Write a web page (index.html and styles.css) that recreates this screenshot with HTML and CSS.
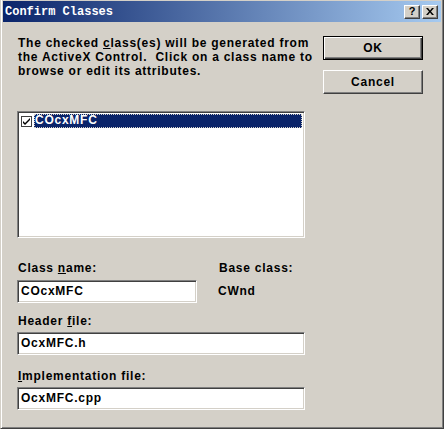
FILE: index.html
```html
<!DOCTYPE html>
<html lang="en">
<head>
    <meta charset="UTF-8">
    <title>Confirm Classes</title>
    <link rel="stylesheet" href="styles.css">
</head>
<body>
    <div class="window">
        <div class="titlebar">
            <span class="title">Confirm Classes</span>
            <div class="caption-buttons">
                <span class="cap-btn help">?</span>
                <span class="cap-btn close">
                    <svg width="8" height="7" viewBox="0 0 8 7">
                        <path d="M0 0h2l2 2.5L6 0h2L5 3.5 8 7H6L4 4.5 2 7H0l3-3.5z" fill="#000"/>
                    </svg>
                </span>
            </div>
        </div>

        <div class="dialog-body">
            <div class="main">
                <p class="intro">The checked <u>c</u>lass(es) will be generated from<br>the ActiveX Control.&nbsp; Click on a class name to<br>browse or edit its attributes.</p>

                <div class="listbox">
                    <div class="list-item">
                        <span class="check">
                            <svg width="9" height="9" viewBox="0 0 9 9">
                                <path d="M1 4l2 2 5-5v2L3 8 1 6z" fill="#000"/>
                            </svg>
                        </span>
                        <span class="item-text">COcxMFC</span>
                    </div>
                </div>

                <div class="fields">
                    <div class="field-row">
                        <div class="field half">
                            <label>Class <u>n</u>ame:</label>
                            <div class="textbox">COcxMFC</div>
                        </div>
                        <div class="field base">
                            <label>Base class:</label>
                            <div class="static">CWnd</div>
                        </div>
                    </div>
                    <div class="field header">
                        <label>Header <u>f</u>ile:</label>
                        <div class="textbox">OcxMFC.h</div>
                    </div>
                    <div class="field impl">
                        <label><u>I</u>mplementation file:</label>
                        <div class="textbox">OcxMFC.cpp</div>
                    </div>
                </div>
            </div>

            <div class="actions">
                <button type="button" class="btn default">OK</button>
                <button type="button" class="btn">Cancel</button>
            </div>
        </div>
    </div>
</body>
</html>
```

FILE: styles.css
```css
body {
    margin: 0;
    background-color: #d4d0c8;
    font-family: "Liberation Sans", Arial, sans-serif;
    font-size: 12px;
    font-weight: bold;
    letter-spacing: 0.75px;
    color: #000;
}

.window {
    width: 444px;
    height: 429px;
    box-sizing: border-box;
    background-color: #d4d0c8;
    border-left: 1px solid #d4d0c8;
    border-right: 1px solid #404040;
    border-bottom: 1px solid #404040;
    box-shadow: inset 1px 0 #fff, inset -1px -1px #808080;
    padding: 1px 2px 0 2px;
}

.titlebar {
    height: 21px;
    display: flex;
    align-items: center;
    justify-content: space-between;
    padding: 0 3px 0 2px;
    background: linear-gradient(to right, #0a246a, #a6caf0);
}

.title {
    font-family: "Liberation Mono", "DejaVu Sans Mono", monospace;
    font-size: 12px;
    font-weight: bold;
    letter-spacing: 0;
    color: #fff;
}

.caption-buttons {
    display: flex;
    gap: 2px;
}

.cap-btn {
    width: 16px;
    height: 14px;
    box-sizing: border-box;
    display: flex;
    align-items: center;
    justify-content: center;
    background-color: #d4d0c8;
    border-top: 1px solid #fff;
    border-left: 1px solid #fff;
    border-right: 1px solid #404040;
    border-bottom: 1px solid #404040;
    box-shadow: inset -1px -1px #808080;
    font-size: 11px;
    letter-spacing: 0;
    line-height: 1;
}

.dialog-body {
    display: flex;
    gap: 18px;
    padding: 14px 0 0 14px;
}

.main {
    width: 288px;
}

.intro {
    margin: 0;
    line-height: 14px;
    white-space: nowrap;
    margin-left: 1px;
}

.listbox {
    margin-top: 33px;
    height: 127px;
    box-sizing: border-box;
    background-color: #fff;
    border-top: 1px solid #808080;
    border-left: 1px solid #808080;
    border-right: 1px solid #fff;
    border-bottom: 1px solid #fff;
    box-shadow: inset 1px 1px #404040, inset -1px -1px #d4d0c8;
    padding: 2px 2px;
}

.list-item {
    display: flex;
    align-items: center;
    height: 14px;
}

.check {
    width: 11px;
    height: 11px;
    box-sizing: border-box;
    border: 1px solid #404040;
    background-color: #fff;
    display: flex;
    align-items: center;
    justify-content: center;
    margin: 0 2px 0 1px;
}

.item-text {
    flex: 1;
    height: 14px;
    line-height: 13px;
    box-sizing: border-box;
    color: #fff;
    background-color: #0a246a;
    outline: 1px dotted #d4d0c8;
    outline-offset: -1px;
    padding-left: 1px;
}

.fields {
    margin-top: 23px;
}

.field-row {
    display: flex;
    gap: 21px;
}

.field label {
    display: block;
    line-height: 14px;
    margin-left: 1px;
    margin-bottom: 5px;
}

.field.half {
    width: 180px;
}

.field.base .static {
    height: 23px;
    line-height: 23px;
}

.field.header {
    margin-top: 11px;
}

.field.impl {
    margin-top: 14px;
}

.field.header label,
.field.impl label {
    margin-bottom: 4px;
}

.textbox {
    height: 23px;
    box-sizing: border-box;
    background-color: #fff;
    border-top: 1px solid #808080;
    border-left: 1px solid #808080;
    border-right: 1px solid #fff;
    border-bottom: 1px solid #fff;
    box-shadow: inset 1px 1px #404040, inset -1px -1px #d4d0c8;
    padding-left: 3px;
    line-height: 20px;
}

.actions {
    display: flex;
    flex-direction: column;
    gap: 10px;
}

.btn {
    width: 100px;
    height: 24px;
    box-sizing: border-box;
    font-family: "Liberation Sans", Arial, sans-serif;
    font-size: 12px;
    font-weight: bold;
    letter-spacing: 0.75px;
    color: #000;
    background-color: #d4d0c8;
    border-top: 1px solid #fff;
    border-left: 1px solid #fff;
    border-right: 1px solid #404040;
    border-bottom: 1px solid #404040;
    box-shadow: inset -1px -1px #808080;
    padding: 0;
}

.btn.default {
    border: 1px solid #000;
    box-shadow: inset 1px 1px #fff, inset -1px -1px #404040, inset -2px -2px #808080;
}
```
